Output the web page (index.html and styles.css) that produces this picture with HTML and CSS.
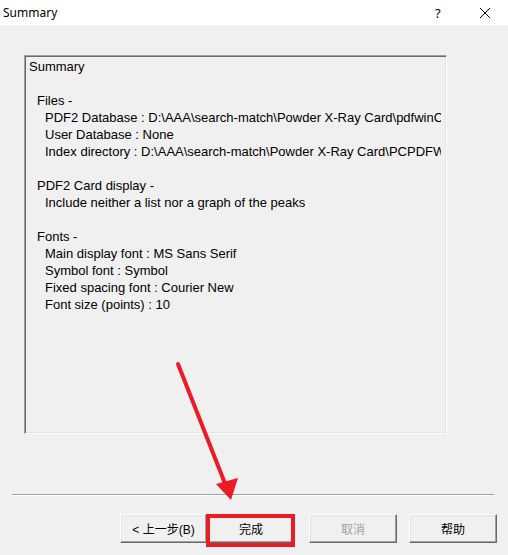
FILE: index.html
```html
<!DOCTYPE html>
<html lang="en">
<head>
  <meta charset="UTF-8" />
  <title>Summary</title>
  <link rel="stylesheet" href="styles.css">
</head>
<body>
  <div class="dialog">
    <div class="titlebar">
      <span class="title">Summary</span>
      <span class="help-btn">?</span>
      <span class="close-btn">
        <svg width="12" height="12" viewBox="0 0 12 12"><path d="M1 1 L11 11 M11 1 L1 11" stroke="#000" stroke-width="1" fill="none"/></svg>
      </span>
    </div>

    <div class="body">
      <div class="summary-box">
        <div class="summary-text">
          <div class="line">Summary</div>
          <div class="line"></div>
          <div class="line lvl1">Files -</div>
          <div class="line lvl2">PDF2 Database : D:\AAA\search-match\Powder X-Ray Card\pdfwinCDROM\pdf2.dat</div>
          <div class="line lvl2">User Database : None</div>
          <div class="line lvl2">Index directory : D:\AAA\search-match\Powder X-Ray Card\PCPDFWIN</div>
          <div class="line"></div>
          <div class="line lvl1">PDF2 Card display -</div>
          <div class="line lvl2">Include neither a list nor a graph of the peaks</div>
          <div class="line"></div>
          <div class="line lvl1">Fonts -</div>
          <div class="line lvl2">Main display font : MS Sans Serif</div>
          <div class="line lvl2">Symbol font : Symbol</div>
          <div class="line lvl2">Fixed spacing font : Courier New</div>
          <div class="line lvl2">Font size (points) : 10</div>
        </div>
      </div>

      <div class="separator"></div>

      <div class="buttons">
        <div class="nav-pair">
          <button class="btn">&lt; 上一步(B)</button>
          <button class="btn finish">完成</button>
        </div>
        <button class="btn disabled">取消</button>
        <button class="btn">帮助</button>
      </div>
    </div>

    <!-- annotation drawn over the dialog -->
    <div class="highlight"></div>
    <svg class="arrow" width="508" height="555" viewBox="0 0 508 555">
      <line x1="178" y1="364" x2="226" y2="486" stroke="#ec1c24" stroke-width="4" stroke-linecap="round"/>
      <polygon points="216,484 238,478 231,500" fill="#ec1c24"/>
    </svg>
  </div>
</body>
</html>
```

FILE: styles.css
```css
body {
  margin: 0;
  background: #f0f0f0;
  font-family: 'Liberation Sans', Arial, sans-serif;
  color: #000;
}

.dialog {
  position: relative;
  width: 508px;
  height: 555px;
  overflow: hidden;
}

.titlebar {
  height: 25px;
  background: #fff;
  display: flex;
  align-items: center;
  font-family: 'Noto Sans', sans-serif;
  font-size: 12px;
}

.title {
  padding-left: 3px;
  flex: 1;
}

.help-btn {
  width: 12px;
  font-size: 13px;
  margin-right: 32px;
}

.close-btn {
  display: flex;
  margin-right: 17px;
}

.body {
  padding: 30px 0 0 24px;
}

.summary-box {
  width: 419px;
  height: 375px;
  border-top: 1px solid #a0a0a0;
  border-left: 1px solid #a0a0a0;
  border-right: 1px solid #fff;
  border-bottom: 1px solid #fff;
  box-shadow: inset 1px 1px 0 #696969, inset -1px -1px 0 #e3e3e3;
  padding: 1px;
}

.summary-text {
  margin-right: 4px;
  overflow: hidden;
  font-size: 13px;
  line-height: 17px;
  padding-top: 1px;
}

.line {
  height: 17px;
  white-space: nowrap;
  padding-left: 3px;
}

.line.lvl1 {
  padding-left: 11px;
}

.line.lvl2 {
  padding-left: 19px;
}

.separator {
  margin: 60px 0 0 -12px;
  width: 482px;
  height: 1px;
  background: #a0a0a0;
  border-bottom: 1px solid #fff;
}

.buttons {
  display: flex;
  margin: 18px 0 0 96px;
  gap: 12px;
}

.nav-pair {
  display: flex;
  margin-right: 2px;
}

.btn {
  width: 88px;
  height: 29px;
  background: #f0f0f0;
  border: none;
  border-top: 1px solid #fff;
  border-left: 1px solid #fff;
  border-right: 1px solid #696969;
  border-bottom: 1px solid #696969;
  box-shadow: inset -1px -1px 0 #a0a0a0, inset 1px 1px 0 #e3e3e3;
  font-family: 'Liberation Sans', 'Noto Sans CJK SC', sans-serif;
  font-size: 12px;
  color: #000;
  padding: 0;
}

.nav-pair .btn:first-child {
  width: 87px;
}

.btn.disabled {
  color: #a0a0a0;
}

.highlight {
  position: absolute;
  left: 206px;
  top: 514px;
  width: 81px;
  height: 25px;
  border: 4px solid #ec1c24;
}

.arrow {
  position: absolute;
  left: 0;
  top: 0;
  pointer-events: none;
}
```
